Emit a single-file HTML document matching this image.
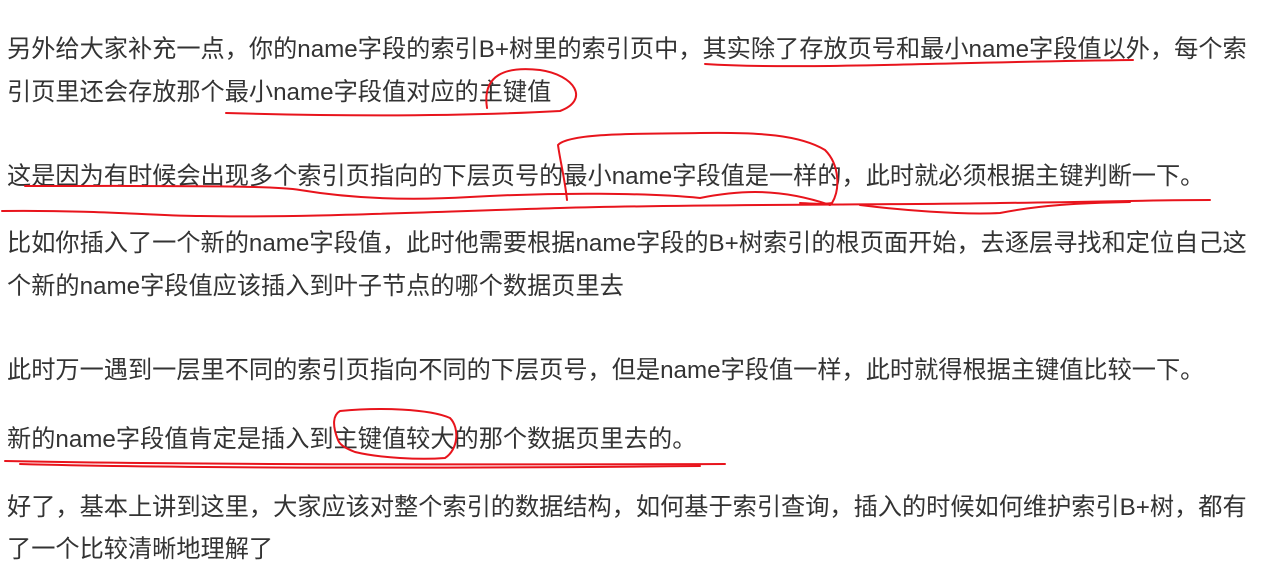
<!DOCTYPE html>
<html><head><meta charset="utf-8"><style>
html,body{margin:0;padding:0;background:#fff;width:1287px;height:582px;overflow:hidden;position:relative}
.l{position:absolute;left:7px;white-space:nowrap;font-family:"Liberation Sans","Noto Sans CJK SC",sans-serif;font-size:24.2px;color:#333;line-height:30px}
svg{position:absolute;left:0;top:0}
</style></head><body>
<div class="l" style="top:35px">另外给大家补充一点，你的name字段的索引B+树里的索引页中，其实除了存放页号和最小name字段值以外，每个索</div>
<div class="l" style="top:78px">引页里还会存放那个最小name字段值对应的主键值</div>
<div class="l" style="top:162px">这是因为有时候会出现多个索引页指向的下层页号的最小name字段值是一样的，此时就必须根据主键判断一下。</div>
<div class="l" style="top:229px">比如你插入了一个新的name字段值，此时他需要根据name字段的B+树索引的根页面开始，去逐层寻找和定位自己这</div>
<div class="l" style="top:272px">个新的name字段值应该插入到叶子节点的哪个数据页里去</div>
<div class="l" style="top:356px">此时万一遇到一层里不同的索引页指向不同的下层页号，但是name字段值一样，此时就得根据主键值比较一下。</div>
<div class="l" style="top:425px">新的name字段值肯定是插入到主键值较大的那个数据页里去的。</div>
<div class="l" style="top:493px">好了，基本上讲到这里，大家应该对整个索引的数据结构，如何基于索引查询，插入的时候如何维护索引B+树，都有</div>
<div class="l" style="top:535px">了一个比较清晰地理解了</div>
<svg width="1287" height="582" fill="none" stroke="#e8141c" stroke-width="2" stroke-linecap="round">
<path d="M705,64 C800,70 950,62 1133,60"/>
<path d="M226,113 C330,116 450,117 560,111 C590,100 575,75 540,70 C505,66 482,75 487,108"/>
<path d="M25,186 C150,186 270,185 300,190 C360,200 420,200 470,197 C560,192 650,193 700,198 C740,190 780,188 830,205"/>
<path d="M2,211 C100,210 160,216 200,216 C300,218 420,212 560,208 C700,204 900,205 1000,203 C1100,202 1150,200 1210,200"/>
<path d="M567,200 C565,180 560,160 558,145 C570,132 650,134 700,133 C760,132 800,135 825,150 C840,165 840,190 832,203 C820,205 805,203 800,203"/>
<path d="M860,205 C900,210 960,215 1000,213 C1040,205 1080,203 1130,202"/>
<path d="M5,461 C150,464 400,465 725,464"/>
<path d="M20,464 C200,469 500,468 700,466"/>
<path d="M338,440 C332,425 333,415 340,411 C380,407 430,409 450,418 C460,428 458,450 445,458 C420,460 380,458 355,452 C345,448 340,445 338,440"/>
</svg>
</body></html>
